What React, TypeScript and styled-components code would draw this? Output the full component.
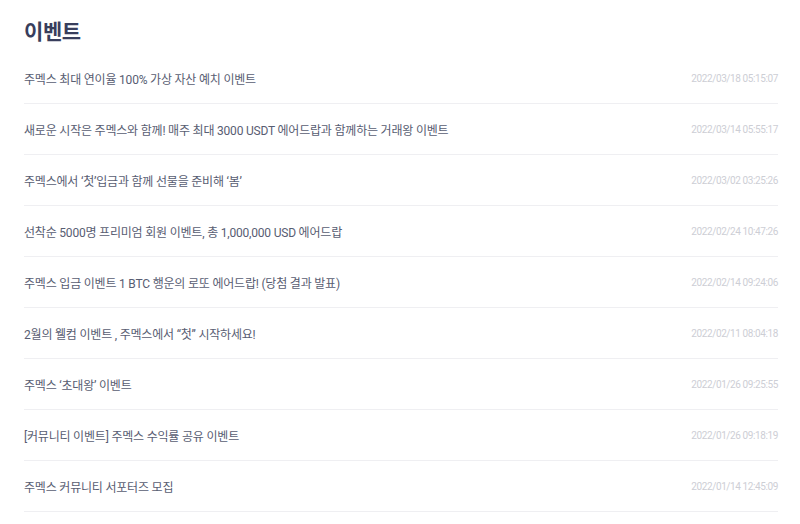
import React from 'react';
import styled, { createGlobalStyle } from 'styled-components';

const events = [
  { title: '주멕스 최대 연이율 100% 가상 자산 예치 이벤트', date: '2022/03/18 05:15:07' },
  { title: '새로운 시작은 주멕스와 함께! 매주 최대 3000 USDT 에어드랍과 함께하는 거래왕 이벤트', date: '2022/03/14 05:55:17' },
  { title: '주멕스에서 ‘첫’입금과 함께 선물을 준비해 ‘봄’', date: '2022/03/02 03:25:26' },
  { title: '선착순 5000명 프리미엄 회원 이벤트, 총 1,000,000 USD 에어드랍', date: '2022/02/24 10:47:26' },
  { title: '주멕스 입금 이벤트 1 BTC 행운의 로또 에어드랍! (당첨 결과 발표)', date: '2022/02/14 09:24:06' },
  { title: '2월의 웰컴 이벤트 , 주멕스에서 “첫” 시작하세요!', date: '2022/02/11 08:04:18' },
  { title: '주멕스 ‘초대왕’ 이벤트', date: '2022/01/26 09:25:55' },
  { title: '[커뮤니티 이벤트] 주멕스 수익률 공유 이벤트', date: '2022/01/26 09:18:19' },
  { title: '주멕스 커뮤니티 서포터즈 모집', date: '2022/01/14 12:45:09' },
];

const GlobalStyle = createGlobalStyle`
  body {
    margin: 0;
    background: #ffffff;
    font-family: Roboto, 'Noto Sans CJK KR', sans-serif;
  }
`;

const App = () => (
  <>
    <GlobalStyle />
    <Page>
      <Title>이벤트</Title>
      <List>
        {events.map((e) => (
          <Row key={e.date}>
            <EventTitle>{e.title}</EventTitle>
            <EventDate>{e.date}</EventDate>
          </Row>
        ))}
      </List>
    </Page>
  </>
);

export default App;

const Page = styled.div`
  padding: 0 22px 0 24px;
`;

const Title = styled.h1`
  margin: 0;
  height: 53px;
  display: flex;
  align-items: center;
  padding-top: 6px;
  box-sizing: border-box;
  font-size: 21px;
  font-weight: 700;
  color: #383e5c;
  letter-spacing: -0.4px;
`;

const List = styled.ul`
  list-style: none;
  margin: 0;
  padding: 0;
`;

const Row = styled.li`
  height: 51px;
  box-sizing: border-box;
  display: flex;
  justify-content: space-between;
  align-items: center;
  border-bottom: 1px solid #efeff2;
`;

const EventTitle = styled.span`
  font-size: 12px;
  color: #585d72;
  letter-spacing: -0.2px;
`;

const EventDate = styled.span`
  font-size: 10px;
  color: #cdced5;
  letter-spacing: -0.4px;
`;
